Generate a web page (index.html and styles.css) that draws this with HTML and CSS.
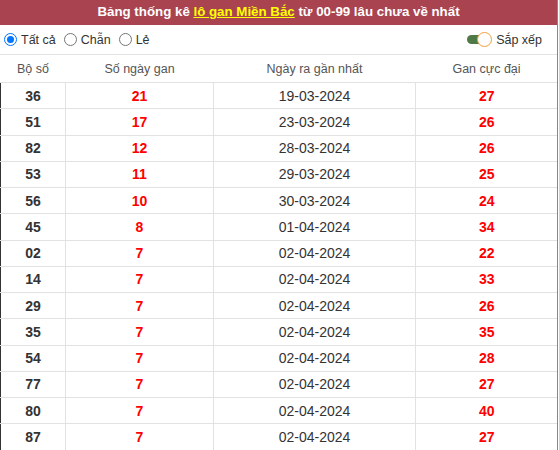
FILE: index.html
```html
<!DOCTYPE html>
<html>
<head>
<meta charset="utf-8">
<link rel="stylesheet" href="styles.css">
</head>
<body>
<div class="box">
  <div class="title">Bảng thống kê <a class="hl">lô gan Miền Bắc</a> từ 00-99 lâu chưa về nhất</div>
  <div class="controls">
    <div class="radios">
      <label class="opt"><span class="radio on"></span>Tất cả</label>
      <label class="opt"><span class="radio"></span>Chẫn</label>
      <label class="opt"><span class="radio"></span>Lẻ</label>
    </div>
    <div class="sort">
      <span class="toggle"><span class="track"></span><span class="knob"></span></span>
      <span>Sắp xếp</span>
    </div>
  </div>
  <table class="tbl">
    <thead>
      <tr><th class="c1">Bộ số</th><th class="c2">Số ngày gan</th><th class="c3">Ngày ra gần nhất</th><th class="c4">Gan cực đại</th></tr>
    </thead>
    <tbody>
      <tr><td class="num">36</td><td class="red">21</td><td class="date">19-03-2024</td><td class="red">27</td></tr>
      <tr><td class="num">51</td><td class="red">17</td><td class="date">23-03-2024</td><td class="red">26</td></tr>
      <tr><td class="num">82</td><td class="red">12</td><td class="date">28-03-2024</td><td class="red">26</td></tr>
      <tr><td class="num">53</td><td class="red">11</td><td class="date">29-03-2024</td><td class="red">25</td></tr>
      <tr><td class="num">56</td><td class="red">10</td><td class="date">30-03-2024</td><td class="red">24</td></tr>
      <tr><td class="num">45</td><td class="red">8</td><td class="date">01-04-2024</td><td class="red">34</td></tr>
      <tr><td class="num">02</td><td class="red">7</td><td class="date">02-04-2024</td><td class="red">22</td></tr>
      <tr><td class="num">14</td><td class="red">7</td><td class="date">02-04-2024</td><td class="red">33</td></tr>
      <tr><td class="num">29</td><td class="red">7</td><td class="date">02-04-2024</td><td class="red">26</td></tr>
      <tr><td class="num">35</td><td class="red">7</td><td class="date">02-04-2024</td><td class="red">35</td></tr>
      <tr><td class="num">54</td><td class="red">7</td><td class="date">02-04-2024</td><td class="red">28</td></tr>
      <tr><td class="num">77</td><td class="red">7</td><td class="date">02-04-2024</td><td class="red">27</td></tr>
      <tr><td class="num">80</td><td class="red">7</td><td class="date">02-04-2024</td><td class="red">40</td></tr>
      <tr><td class="num">87</td><td class="red">7</td><td class="date">02-04-2024</td><td class="red">27</td></tr>
    </tbody>
  </table>
</div>
</body>
</html>
```

FILE: styles.css
```css
html, body {
  margin: 0;
  padding: 0;
  background: #fff;
}
body {
  font-family: "Liberation Sans", Arial, sans-serif;
  color: #333;
}
.box {
  width: 557px;
  border-right: 1px solid #888;
  overflow: hidden;
}
.title {
  height: 25px;
  line-height: 24px;
  background: #a94350;
  color: #fff;
  font-weight: bold;
  font-size: 13.3px;
  text-align: center;
}
.hl {
  color: #ffff00;
  text-decoration: underline;
}
.controls {
  height: 30px;
  display: flex;
  align-items: center;
  justify-content: space-between;
  padding: 0 15px 0 4px;
  border-bottom: 1px solid #e2e2e2;
  box-sizing: border-box;
  font-size: 12.5px;
  color: #333;
}
.radios {
  display: flex;
  gap: 8px;
  align-items: center;
}
.opt {
  display: flex;
  align-items: center;
  gap: 4px;
}
.radio {
  width: 13px;
  height: 13px;
  border: 1px solid #767676;
  border-radius: 50%;
  box-sizing: border-box;
  display: inline-block;
  background: #fff;
  position: relative;
}
.radio.on {
  border: 1px solid #0075ff;
}
.radio.on::after {
  content: "";
  position: absolute;
  left: 2px;
  top: 2px;
  width: 7px;
  height: 7px;
  border-radius: 50%;
  background: #0075ff;
}
.sort {
  display: flex;
  align-items: center;
  gap: 4px;
}
.toggle {
  position: relative;
  width: 25px;
  height: 15px;
  display: inline-block;
}
.track {
  position: absolute;
  left: 0;
  top: 3px;
  width: 18px;
  height: 9px;
  border-radius: 5px;
  background: #4f7a48;
}
.knob {
  position: absolute;
  left: 10px;
  top: 0;
  width: 15px;
  height: 15px;
  box-sizing: border-box;
  border-radius: 50%;
  border: 1.5px solid #f0a040;
  background: #fff;
}
.tbl {
  width: 557px;
  border-collapse: collapse;
  table-layout: fixed;
}
.tbl th {
  height: 27px;
  font-weight: normal;
  font-size: 12.5px;
  color: #555;
  padding: 0;
  border-bottom: 1px solid #e2e2e2;
  text-align: center;
}
.c1 { width: 65px; }
.c2 { width: 148px; }
.c3 { width: 202px; }
.c4 { width: 142px; }
.tbl td {
  height: 25.25px;
  padding: 0;
  text-align: center;
  font-size: 14px;
  border-bottom: 1px solid #e2e2e2;
  border-left: 1px solid #e2e2e2;
}
.tbl td.num {
  font-weight: bold;
  color: #333;
  border-left: 1px solid #333;
}
.tbl td.red {
  font-weight: bold;
  color: #ff0000;
}
.tbl td.date {
  color: #333;
}
```
